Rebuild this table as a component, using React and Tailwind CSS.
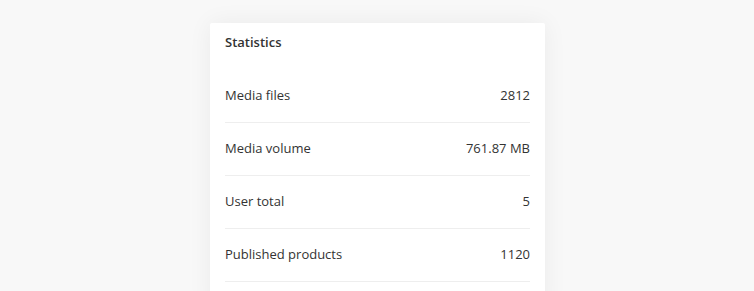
import React from "react";

const stats = [
  { label: "Media files", value: "2812" },
  { label: "Media volume", value: "761.87 MB" },
  { label: "User total", value: "5" },
  { label: "Published products", value: "1120" },
];

export default function App() {
  return (
    <div className="h-[291px] overflow-hidden bg-[#f8f8f8] pt-[23px] font-['Open_Sans',sans-serif] text-[#333]">
      <div className="ml-[210px] w-[335px] rounded-[2px] bg-white pb-[30px] shadow-[0_0_24px_rgba(0,0,0,0.06)]">
        <div className="h-[47px] px-[15px] pt-[10px] text-[13px] font-semibold leading-[18px] text-[#333]">
          Statistics
        </div>
        {stats.map((s) => (
          <div
            key={s.label}
            className="mx-[15px] flex h-[53px] items-center justify-between border-b border-[#eee] text-[13px]"
          >
            <span>{s.label}</span>
            <span>{s.value}</span>
          </div>
        ))}
      </div>
    </div>
  );
}
